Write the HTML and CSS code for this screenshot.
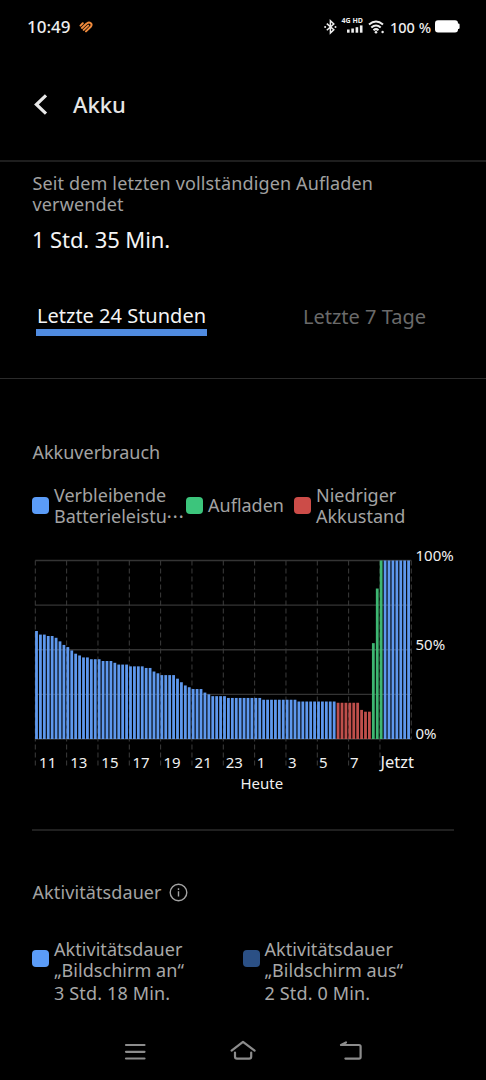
FILE: index.html
```html
<!DOCTYPE html>
<html lang="de">
<head>
  <meta charset="UTF-8">
  <meta name="viewport" content="width=device-width, initial-scale=1">
  <title>Akku</title>
  <link rel="stylesheet" href="styles.css">
</head>
<body>
  <div class="status-bar">
    <span class="time">10:49</span>
    <svg class="app-icon" width="14" height="12" viewBox="0 0 14 12">
      <path d="M1.5 4.6L3.8 2.2M2.9 6.9L7.6 2.6M4.7 8.9L9.2 4.6M7 10.4L11.7 5.8Q13.4 3.7 11.8 2.2Q10 0.8 8.2 2.2" />
    </svg>
    <div class="status-right">
      <svg class="bluetooth" width="13" height="16" viewBox="0 0 13 16">
        <path d="M2.8 4.6L9.8 10.8L6.4 14V1.8L9.8 5L2.8 11.2" />
        <circle cx="1.1" cy="7.9" r="1" />
        <circle cx="11.5" cy="7.9" r="1" />
      </svg>
      <div class="signal">
        <span class="network">4G HD</span>
        <svg width="16" height="8" viewBox="0 0 16 8">
          <rect x="0" y="4.5" width="2.6" height="3.2" />
          <rect x="4.3" y="3.5" width="2.6" height="4.2" />
          <rect x="8.6" y="2.2" width="2.6" height="5.5" />
          <rect x="12.9" y="0.4" width="2.6" height="7.3" />
        </svg>
      </div>
      <svg class="wifi" width="17" height="14" viewBox="0 0 17 14">
        <path d="M1 4.6Q8 -1.6 15 4.6M3.3 7.6Q8 3.4 12.7 7.6M5.5 10.2Q8 8 10.5 10.2" />
        <circle cx="8" cy="12.2" r="1.3" />
        <circle cx="14.6" cy="12" r="1.2" />
      </svg>
      <span class="percent">100 %</span>
      <svg class="battery" width="25" height="13" viewBox="0 0 25 13">
        <rect x="0" y="0.3" width="23" height="12.2" rx="3" />
        <rect x="22" y="3.6" width="2.6" height="5.4" rx="1.2" />
      </svg>
    </div>
  </div>

  <header>
    <svg class="back" width="14" height="22" viewBox="0 0 14 22">
      <path d="M12 2.3L2.4 11.5L12 20.7" />
    </svg>
    <h1>Akku</h1>
  </header>

  <section class="summary">
    <p class="label">Seit dem letzten vollständigen Aufladen verwendet</p>
    <p class="value">1 Std. 35 Min.</p>
    <div class="tabs">
      <span class="tab active">Letzte 24 Stunden</span>
      <span class="tab">Letzte 7 Tage</span>
    </div>
  </section>

  <section class="usage">
    <h2>Akkuverbrauch</h2>
    <div class="legend">
      <div class="legend-item remaining"><i class="swatch blue"></i><span>Verbleibende<br>Batterieleistu<b class="dots">···</b></span></div>
      <div class="legend-item charging"><i class="swatch green"></i><span>Aufladen</span></div>
      <div class="legend-item"><i class="swatch red"></i><span>Niedriger<br>Akkustand</span></div>
    </div>
    <svg id="chart" class="chart" width="486" height="255" viewBox="0 0 486 255"></svg>
  </section>

  <section class="activity">
    <h2>Aktivitätsdauer
      <svg class="info" width="19" height="19" viewBox="0 0 19 19">
        <circle cx="9.5" cy="9.5" r="8.3" />
        <path d="M9.5 8.2V13.6M9.5 5.3V6.9" />
      </svg>
    </h2>
    <div class="durations">
      <div class="duration">
        <i class="swatch blue"></i>
        <div>
          <p>Aktivitätsdauer<br>„Bildschirm an“</p>
          <p class="hours">3 Std. 18 Min.</p>
        </div>
      </div>
      <div class="duration">
        <i class="swatch navy"></i>
        <div>
          <p>Aktivitätsdauer<br>„Bildschirm aus“</p>
          <p class="hours">2 Std. 0 Min.</p>
        </div>
      </div>
    </div>
  </section>

  <nav>
    <svg width="28" height="24" viewBox="0 0 28 24">
      <path d="M5 5H23.5M5 11.8H23.5M5 18.5H23.5" />
    </svg>
    <svg width="28" height="24" viewBox="0 0 28 24">
      <path d="M2.6 10.6L14 1.8L25.6 10.6M6 12.5V16.5Q6 18.6 8 18.6H20.2Q22.2 18.6 22.2 16.5V12.5" />
    </svg>
    <svg width="28" height="24" viewBox="0 0 28 24">
      <path d="M9 2.5L4 5H22Q23.6 5 23.6 6.6V17Q23.6 18.6 22 18.6H8.4" />
    </svg>
  </nav>

  <script src="chart.js"></script>
</body>
</html>
```
FILE: styles.css
```css
* {
  box-sizing: border-box;
}
body {
  margin: 0;
  width: 486px;
  height: 1080px;
  overflow: hidden;
  background: #000;
  color: #fff;
  font-family: "Noto Sans", sans-serif;
  display: flex;
  flex-direction: column;
}
h1, h2, p {
  margin: 0;
  font-weight: normal;
}
svg {
  display: block;
  flex: none;
}

/* status bar */
.status-bar {
  height: 51px;
  flex: none;
  display: flex;
  align-items: center;
  padding: 2px 26px 0 27px;
}
.time {
  font-size: 17px;
  font-weight: 500;
  line-height: 24px;
  color: #eee;
}
.app-icon {
  margin-left: 8px;
  fill: none;
  stroke: #f08a3c;
  stroke-width: 2;
  stroke-linecap: round;
}
.status-right {
  display: flex;
  align-items: center;
  margin-left: auto;
}
.bluetooth {
  margin-right: 2px;
}
.bluetooth path {
  fill: none;
  stroke: #eee;
  stroke-width: 1.5;
}
.bluetooth circle, .signal rect, .wifi circle {
  fill: #eee;
}
.signal {
  display: flex;
  flex-direction: column;
  align-items: flex-end;
  margin: -4px 5px 0 3px;
}
.network {
  font-size: 7px;
  font-weight: bold;
  line-height: 9px;
  color: #eee;
}
.wifi path {
  fill: none;
  stroke: #eee;
  stroke-width: 2;
}
.percent {
  margin: 0 4px 0 5px;
  font-size: 14.5px;
  line-height: 24px;
  font-weight: 500;
  color: #eee;
}
.battery {
  fill: #fff;
}

header {
  height: 111px;
  flex: none;
  display: flex;
  align-items: center;
  padding: 0 0 3px 34px;
  border-bottom: 2px solid #1e1e1e;
}
.back {
  overflow: visible;
  fill: none;
  stroke: #e8e8e8;
  stroke-width: 3.2;
}
h1 {
  margin-left: 25px;
  font-size: 22px;
  font-weight: 500;
  line-height: 30px;
  color: #e6e6e6;
}

.summary {
  height: 217px;
  flex: none;
  padding: 11px 32px 0;
  border-bottom: 1px solid #2b2b2b;
}
.label {
  width: 380px;
  padding-left: 0.5px;
  font-size: 18px;
  line-height: 20.5px;
  letter-spacing: 0.14px;
  color: #a0a0a0;
}
.value {
  margin-top: 10px;
  font-size: 22px;
  line-height: 30px;
  letter-spacing: -0.1px;
  color: #f4f4f4;
}
.tabs {
  display: flex;
  justify-content: space-between;
  align-items: flex-start;
  margin-top: 47px;
  padding: 0 28px 0 4px;
}
.tab {
  padding-top: 2px;
  font-size: 20px;
  line-height: 28px;
  color: #6a6a6a;
}
.tab.active {
  padding: 1px 1px 0 1px;
  line-height: 27px;
  border-bottom: 7px solid #508be0;
  color: #f4f4f4;
}

/* battery usage */
.usage {
  height: 450px;
  flex: none;
  padding-top: 61px;
  color: #a3a3a3;
}
h2 {
  padding-left: 32.5px;
  font-size: 18px;
  line-height: 24px;
  color: #a3a3a3;
}
.legend {
  display: flex;
  align-items: center;
  height: 41px;
  margin-top: 21px;
  padding-left: 32px;
  font-size: 18px;
  line-height: 20.5px;
}
.legend-item {
  display: flex;
  align-items: center;
}
.remaining {
  width: 154px;
  white-space: nowrap;
}
.charging {
  width: 108px;
}
.dots {
  font-weight: 500;
  letter-spacing: 1px;
}
.swatch {
  width: 17px;
  height: 17px;
  flex: none;
  margin-right: 5px;
  border-radius: 4px;
}
.blue {
  background: #5b9cf8;
}
.green {
  background: #3cc57c;
}
.red {
  background: #cc4c48;
}
.navy {
  background: #2b5085;
}
.chart {
  margin-top: 19px;
}
.chart text {
  font-size: 15px;
  fill: #f0f0f0;
}
.chart .now {
  font-size: 16.5px;
}
.grid {
  stroke: #343434;
  stroke-width: 1.3;
}
.tick {
  stroke: #3c3c3c;
  stroke-width: 1;
  stroke-dasharray: 5 3;
}

/* screen time */
.activity {
  height: 191px;
  flex: none;
  margin: 0 32px;
  border-top: 2px solid #202020;
  padding-top: 49px;
}
.activity h2 {
  display: flex;
  align-items: center;
  padding-left: 0.5px;
  letter-spacing: 0.1px;
}
.info {
  margin-left: 7px;
  fill: none;
  stroke: #a3a3a3;
  stroke-width: 1.4;
}
.durations {
  display: grid;
  grid-template-columns: 210.5px 1fr;
  margin-top: 35px;
  font-size: 18px;
  line-height: 20.5px;
  letter-spacing: 0.05px;
  color: #a8a8a8;
}
.duration {
  display: flex;
}
.duration .swatch {
  margin-top: 11px;
}
.hours {
  margin-top: 1px;
  line-height: 24px;
  letter-spacing: 0.15px;
}

nav {
  display: flex;
  justify-content: center;
  gap: 80px;
  margin-top: 20px;
}
nav svg {
  fill: none;
  stroke: #8c8c8c;
  stroke-width: 2.2;
  stroke-linecap: round;
  stroke-linejoin: round;
}
```
FILE: chart.js
```js
// one value per 15 minutes, the last 24 hours
const levels = [
  60.5, 58.5, 58.5, 57.7, 57.7, 56.7, 54.7, 52.7, 51.5, 49.6, 47.8, 46.8,
  45.7, 45.7, 44.7, 44.7, 44.7, 43.7, 43.7, 43.7, 42.7, 41.7, 41.7, 41.7,
  40.7, 40.7, 40.7, 40.7, 39.8, 39.8, 37.8, 36.8, 35.8, 35.8, 35.8, 35.8,
  33.8, 31.8, 30, 29, 28, 28, 28, 26, 25, 24, 24, 24,
  24, 23, 23, 23, 23, 23, 23, 23, 23, 23, 22, 22,
  22, 22, 22, 22, 22, 22, 22, 21, 21, 21, 21, 21,
  21, 21, 21, 21, 21, 20.3, 20.3, 20.3, 20.3, 20.3, 20.3, 16.3,
  15.3, 15.3, 53.7, 84.3, 100, 100, 100, 100, 100, 100, 100, 100
];
const hours = ['11', '13', '15', '17', '19', '21', '23', '1', '3', '5', '7'];

const chart = document.getElementById('chart');
const left = 35.3;
const top0 = 15.5;
const height = 178.5;
const bottom = top0 + height;
const step = 376 / 96;

function add(tag, attrs, text) {
  const el = document.createElementNS('http://www.w3.org/2000/svg', tag);
  for (const key in attrs) el.setAttribute(key, attrs[key]);
  if (text) el.textContent = text;
  chart.appendChild(el);
}

function barColor(i) {
  if (i >= 77 && i < 86) return '#c9534f';
  if (i >= 86 && i < 89) return '#40c077';
  return '#63a0fa';
}

for (let i = 0; i <= 4; i++) {
  const y = top0 + i * height / 4;
  add('line', { class: 'grid', x1: left, x2: left + 376, y1: y, y2: y });
}
for (let i = 0; i <= 12; i++) {
  const x = left + i * 376 / 12;
  add('line', { class: 'tick', x1: x, x2: x, y1: top0, y2: i === 12 ? bottom : 223 });
}

levels.forEach(function (level, i) {
  const h = height * level / 100;
  add('rect', { x: left + i * step - 0.2, y: bottom - h, width: 2.8, height: h, fill: barColor(i), opacity: 0.95 });
});

hours.forEach(function (hour, i) {
  add('text', { x: left + 3.8 + i * 31.1, y: 223 }, hour);
});
add('text', { class: 'now', x: 380.5, y: 223 }, 'Jetzt');
add('text', { x: 240.5, y: 244 }, 'Heute');
add('text', { x: 415.5, y: 16 }, '100%');
add('text', { x: 415.5, y: 105 }, '50%');
add('text', { x: 415.5, y: 194 }, '0%');
```
